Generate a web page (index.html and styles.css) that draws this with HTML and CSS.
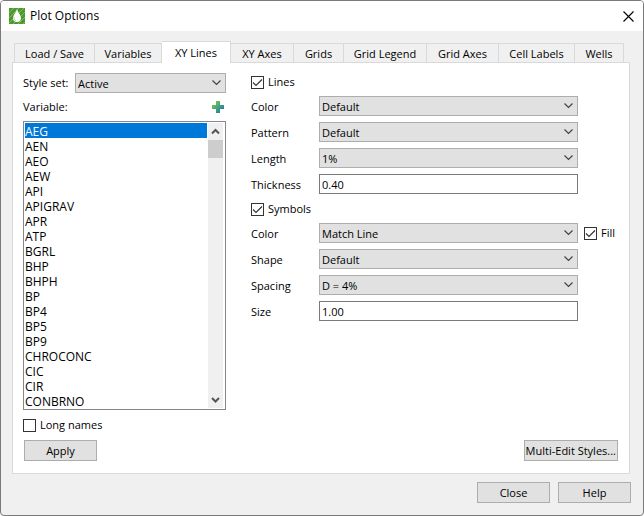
FILE: index.html
```html
<!DOCTYPE html>
<html lang="en">
	<head>
		<meta charset="utf-8">
		<title>Plot Options</title>
		<link rel="stylesheet" href="styles.css">
	</head>
	<body>
		<div class="dialog">
			<header class="titlebar">
				<svg class="logo" viewBox="0 0 16 16" width="16" height="16">
					<rect width="16" height="16" fill="#4c9a2f"/>
					<path d="M0 5L5 0M0 10L10 0M0 15L15 0M4 16L16 4M9 16L16 9M14 16L16 14" stroke="#7fbc5c" stroke-width="1"/>
					<path d="M8 1C8.500 4 12 7 12 10A4 4 0 0 1 4 10C4 7 7.500 4 8 1Z" fill="#fff"/>
					<path d="M5 9V11L7 13" stroke="#b9d9a8" fill="none"/>
				</svg>
				<h1>Plot Options</h1>
				<button class="close" type="button" aria-label="Close window">
					<svg viewBox="0 0 11 11" width="11" height="11"><path d="M.5 .5L10.500 10.500M10.500 .5L.5 10.500" stroke="#000" stroke-width="1.100"/></svg>
				</button>
			</header>

			<nav class="tabs" role="tablist">
				<button type="button" role="tab">Load / Save</button>
				<button type="button" role="tab">Variables</button>
				<button type="button" role="tab" class="active" aria-selected="true">XY Lines</button>
				<button type="button" role="tab">XY Axes</button>
				<button type="button" role="tab">Grids</button>
				<button type="button" role="tab">Grid Legend</button>
				<button type="button" role="tab">Grid Axes</button>
				<button type="button" role="tab">Cell Labels</button>
				<button type="button" role="tab">Wells</button>
			</nav>

			<main class="pane">
				<div class="columns">
					<section class="variables">
						<div class="style-set">
							<label for="styleset">Style set:</label>
							<select id="styleset" class="combo"><option>Active</option></select>
						</div>
						<div class="list-head">
							<label for="variable">Variable:</label>
							<button class="add" type="button" aria-label="Add variable">
								<svg viewBox="0 0 12 12" width="12" height="12">
									<defs>
										<linearGradient id="plus" x1="0" y1="0" x2="1" y2="1">
											<stop offset="0.200" stop-color="#6fbf55"/>
											<stop offset="0.800" stop-color="#2785a0"/>
										</linearGradient>
									</defs>
									<path d="M4 0H8V4H12V8H8V12H4V8H0V4H4Z" fill="url(#plus)"/>
								</svg>
							</button>
						</div>
						<div class="listbox">
							<select id="variable" size="19">
								<option selected>AEG</option>
								<option>AEN</option>
								<option>AEO</option>
								<option>AEW</option>
								<option>API</option>
								<option>APIGRAV</option>
								<option>APR</option>
								<option>ATP</option>
								<option>BGRL</option>
								<option>BHP</option>
								<option>BHPH</option>
								<option>BP</option>
								<option>BP4</option>
								<option>BP5</option>
								<option>BP9</option>
								<option>CHROCONC</option>
								<option>CIC</option>
								<option>CIR</option>
								<option>CONBRNO</option>
							</select>
							<div class="scrollbar">
								<svg viewBox="0 0 15 17" width="15" height="17"><path d="M4 10.500L7.500 7L11 10.500" fill="none" stroke="#555" stroke-width="2"/></svg>
								<div class="thumb"></div>
								<svg viewBox="0 0 15 17" width="15" height="17"><path d="M4 7L7.500 10.500L11 7" fill="none" stroke="#555" stroke-width="2"/></svg>
							</div>
						</div>
						<label class="check"><input type="checkbox">Long names</label>
					</section>

					<section class="settings">
						<label class="check"><input type="checkbox" checked>Lines</label>
						<div class="fields">
							<label for="linecolor">Color</label>
							<select id="linecolor" class="combo"><option>Default</option></select>
							<label for="pattern">Pattern</label>
							<select id="pattern" class="combo"><option>Default</option></select>
							<label for="length">Length</label>
							<select id="length" class="combo"><option>1%</option></select>
							<label for="thickness">Thickness</label>
							<input id="thickness" type="text" value="0.40">
						</div>
						<label class="check"><input type="checkbox" checked>Symbols</label>
						<div class="fields">
							<label for="symcolor">Color</label>
							<select id="symcolor" class="combo"><option>Match Line</option></select>
							<label class="check fill"><input type="checkbox" checked>Fill</label>
							<label for="shape">Shape</label>
							<select id="shape" class="combo"><option>Default</option></select>
							<label for="spacing">Spacing</label>
							<select id="spacing" class="combo"><option>D = 4%</option></select>
							<label for="size">Size</label>
							<input id="size" type="text" value="1.00">
						</div>
					</section>
				</div>
				<div class="actions">
					<button class="btn" type="button">Apply</button>
					<button class="btn" type="button">Multi-Edit Styles...</button>
				</div>
			</main>

			<footer>
				<button class="btn" type="button">Close</button>
				<button class="btn" type="button">Help</button>
			</footer>
		</div>
	</body>
</html>
```

FILE: styles.css
```css
* {
	box-sizing: border-box;
	margin: 0;
	padding: 0;
}

body {
	background: #fff;
	color: #000;
	font: 11px/14px "Open Sans", "Noto Sans", sans-serif;
}

button, input, select {
	font: inherit;
	color: inherit;
	border-radius: 0;
}

svg {
	display: block;
}

.dialog {
	display: flex;
	flex-direction: column;
	min-height: 100vh;
	background: #f0f0f0;
	border: 1px solid #7a7a7a;
	border-radius: 4px;
	overflow: hidden;
}

.titlebar {
	display: flex;
	align-items: center;
	gap: 5px;
	height: 30px;
	padding: 0 9px 0 8px;
	background: #fff;
}

.titlebar h1 {
	flex: 1;
	font-size: 12px;
	font-weight: normal;
}

.close, .add {
	border: 0;
	background: none;
}

/* tabs */
.tabs {
	display: grid;
	grid-template-columns: 81fr 67fr 69fr 63fr 50fr 83fr 72fr 76fr 49fr;
	align-items: end;
	height: 31px;
	margin: 0 19px 0 13px;
}

.tabs button {
	height: 19px;
	padding-top: 2px;
	background: #f0f0f0;
	border: 1px solid #d9d9d9;
	border-left-width: 0;
	border-bottom: 0;
	white-space: nowrap;
}

.tabs button:first-child {
	border-left-width: 1px;
}

.tabs .active {
	position: relative;
	height: 22px;
	margin-bottom: -1px;
	padding-bottom: 2px;
	background: #fff;
}

.pane {
	display: flex;
	flex: 1;
	flex-direction: column;
	justify-content: space-between;
	margin: 0 13px 0 11px;
	padding: 10px 11px 12px 10px;
	background: #fff;
	border: 1px solid #d9d9d9;
}

.columns {
	display: grid;
	grid-template-columns: 203px 1fr;
	gap: 25px;
}

.combo {
	appearance: none;
	width: 100%;
	height: 20px;
	padding: 1px 16px 0 2px;
	border: 1px solid #adadad;
	background: #e1e1e1 url("data:image/svg+xml,%3Csvg xmlns='http://www.w3.org/2000/svg' width='9' height='6'%3E%3Cpath d='M.5 .5L4.500 4.500L8.500 .5' fill='none' stroke='%23444' stroke-width='1.200'/%3E%3C/svg%3E") no-repeat right 4px center;
}

input[type="text"] {
	width: 100%;
	height: 20px;
	padding: 0 2px;
	border: 1px solid #7a7a7a;
	background: #fff;
}

.check {
	display: flex;
	align-items: center;
	gap: 4px;
}

.check input {
	appearance: none;
	width: 13px;
	height: 13px;
	border: 1px solid #333;
	background: #fff;
}

.check input:checked {
	background: url("data:image/svg+xml,%3Csvg xmlns='http://www.w3.org/2000/svg' width='11' height='11'%3E%3Cpath d='M1 5.500L4 8.500L10 2.500' fill='none' stroke='%23333' stroke-width='1.200'/%3E%3C/svg%3E") no-repeat center;
}

/* left column */
.style-set {
	display: grid;
	grid-template-columns: 52px 1fr;
	align-items: center;
}

.list-head {
	display: flex;
	justify-content: space-between;
	align-items: center;
	height: 28px;
	padding-right: 2px;
}

.listbox {
	display: flex;
	padding: 1px;
	border: 1px solid #828790;
}

.listbox select {
	flex: 1;
	height: 285px;
	border: 0;
	outline: 0;
	overflow: hidden;
	background: #fff;
	font-size: 12px;
}

.listbox option {
	height: 15px;
	min-height: 15px;
	padding: 0;
	line-height: 15px;
}

.listbox option:checked {
	background: #0078d7 linear-gradient(#0078d7, #0078d7);
	color: #fff;
}

.scrollbar {
	display: flex;
	flex-direction: column;
	width: 17px;
	border: solid #fff;
	border-width: 0 1px;
	background: #f0f0f0;
}

.thumb {
	height: 18px;
	margin-bottom: auto;
	background: #cdcdcd;
}

.variables .check {
	margin-top: 8px;
}

/* right column */
.settings {
	padding-top: 2px;
}

.fields {
	display: grid;
	grid-template-columns: 68px 1fr 40px;
	row-gap: 6px;
	align-items: center;
	padding: 7px 0 8px;
}

.fields > label:not(.fill) {
	grid-column: 1;
	padding-top: 2px;
}

.fill {
	padding-left: 6px;
}

.btn {
	min-width: 73px;
	height: 21px;
	padding: 0 1px;
	background: #e1e1e1;
	border: 1px solid #adadad;
	white-space: nowrap;
}

.actions {
	display: flex;
	justify-content: space-between;
	padding-left: 1px;
}

footer {
	display: flex;
	justify-content: flex-end;
	gap: 8px;
	padding: 8px 12px 12px;
}
```
